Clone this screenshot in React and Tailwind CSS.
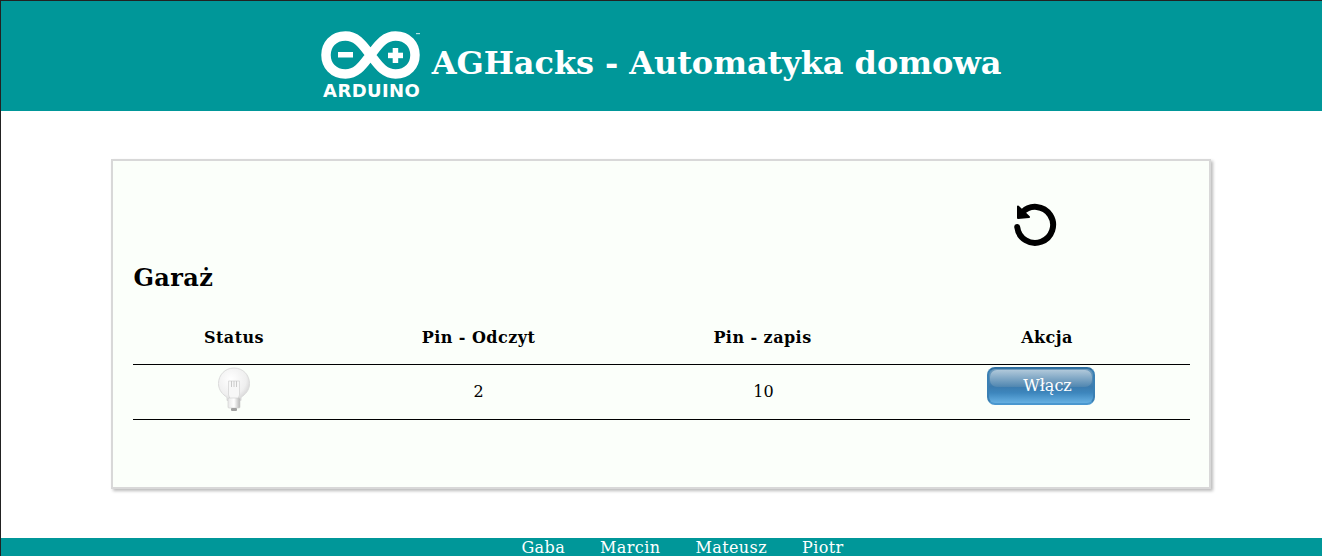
import React from "react";

const ArduinoLogo = () => (
  <div className="flex flex-col items-center w-[100px] shrink-0 -ml-[1px]">
    <svg width="100" height="50" viewBox="0 0 100 50" className="-mb-[1px]">
      <path
        d="M24.500 7C37 7 43 18 49.500 26C56 34 62 45 74.500 45C87 45 94 36 94 26C94 16 87 7 74.500 7C62 7 56 18 49.500 26C43 34 37 45 24.500 45C12 45 5 36 5 26C5 16 12 7 24.500 7Z"
        fill="none"
        stroke="#fff"
        strokeWidth="9.500"
      />
      <rect x="17" y="23" width="15" height="5.500" fill="#fff" />
      <rect x="67" y="23.700" width="15" height="5.500" fill="#fff" />
      <rect x="71.700" y="19" width="5.500" height="15" fill="#fff" />
      <rect x="95" y="4" width="4" height="1.200" fill="#fff" opacity="0.7" />
    </svg>
    <span className="font-['DejaVu_Sans'] font-bold text-[18px] leading-[20px] tracking-[0.4px] text-white mt-[3px] pl-[2px]">
      ARDUINO
    </span>
  </div>
);

const ReloadIcon = () => (
  <svg width="44" height="44" viewBox="0 0 44 44" fill="none">
    <path
      d="M4.200 24A18 18 0 1 0 9 9.500"
      stroke="#000"
      strokeWidth="6"
      strokeLinecap="round"
    />
    <path d="M5 3.500L5 15L16 14Z" fill="#000" stroke="#000" strokeWidth="2" strokeLinejoin="round" />
  </svg>
);

const Bulb = () => (
  <svg width="34" height="46" viewBox="0 0 34 46">
    <defs>
      <radialGradient id="glass" cx="0.4" cy="0.35" r="0.7">
        <stop offset="0" stopColor="#ffffff" />
        <stop offset="0.7" stopColor="#efefef" />
        <stop offset="1" stopColor="#d2d2d2" />
      </radialGradient>
      <linearGradient id="base" x1="0" x2="1" y1="0" y2="0">
        <stop offset="0" stopColor="#e8e8e8" />
        <stop offset="0.5" stopColor="#ffffff" />
        <stop offset="1" stopColor="#b5b5b5" />
      </linearGradient>
    </defs>
    <path
      d="M17 1C8 1 1.500 8 1.500 16.500c0 7 4.500 11 8.500 14v3h14v-3c4-3 8.500-7 8.500-14C32.500 8 26 1 17 1z"
      fill="url(#glass)"
      stroke="#dcdcdc"
    />
    <path d="M11.500 14h11v14l-2 5h-7l-2-5z" fill="#f7f7f7" stroke="#d6d6d6" strokeWidth="0.8" />
    <path d="M14.500 14v6M17 14v6M19.500 14v6" stroke="#cacaca" strokeWidth="1" />
    <rect x="11" y="31" width="12" height="10" rx="1" fill="url(#base)" stroke="#cccccc" strokeWidth="0.6" />
    <rect x="14" y="41" width="6" height="3" rx="1" fill="#a0a0a0" />
  </svg>
);

const App = () => {
  const people = ["Gaba", "Marcin", "Mateusz", "Piotr"];

  return (
    <div className="h-[556px] overflow-hidden flex flex-col bg-white border-l border-t border-[#222] font-['DejaVu_Serif',serif] text-black">
      <header className="h-[110px] shrink-0 bg-[#009799] flex items-start justify-center">
        <div className="flex items-start gap-[11px] pt-[28px]">
          <ArduinoLogo />
          <h1 className="text-[32px] leading-[64px] font-bold tracking-[-0.08px] text-white mt-[2px]">
            AGHacks - Automatyka domowa
          </h1>
        </div>
      </header>

      <main className="flex-1 flex flex-col items-center pt-[48px] pr-[2px]">
        <section className="w-[1100px] h-[330px] bg-[#fbfffa] border-2 border-[#d8d8d8] shadow-[2px_2px_3px_#bbb] px-[20px]">
          <div className="flex justify-end pr-[132px] pt-[42px] h-[88px]">
            <ReloadIcon />
          </div>
          <h2 className="text-[24px] font-bold tracking-[0.35px] leading-[32px] mt-[13px] pl-[1px]">Garaż</h2>
          <table className="w-[1057px] mt-[18px] table-fixed border-collapse text-[16px]">
            <thead>
              <tr className="h-[52px] border-b border-black">
                <th className="w-[202px] pl-[1px] font-bold tracking-[0.45px]">Status</th>
                <th className="w-[286px] pl-[2px] font-bold tracking-[0.45px]">Pin - Odczyt</th>
                <th className="w-[284px] font-bold tracking-[0.45px]">Pin - zapis</th>
                <th className="font-bold tracking-[0.45px]">Akcja</th>
              </tr>
            </thead>
            <tbody>
              <tr className="h-[55px] border-b border-black">
                <td className="text-center align-top pt-[2px]">
                  <div className="flex justify-center"><Bulb /></div>
                </td>
                <td className="text-center pl-[2px]">2</td>
                <td className="text-center pl-[2px]">10</td>
                <td className="align-top pt-[2px] pl-[82px]">
                  <button className="relative overflow-hidden w-[108px] h-[38px] rounded-[8px] border-2 border-t-[#2f6f9f] border-x-[#3a80b4] border-b-[#4a97cf] bg-[linear-gradient(#6f9cbd,#3b7bae_52%,#3d86bd_70%,#66b0e2)] text-white text-[16px] pl-[14px]">
                    <span className="absolute left-[1px] right-[1px] top-[1px] h-[17px] rounded-[7px] bg-[linear-gradient(#b0c8da,#4f86b0)]" />
                    <span className="relative">Włącz</span>
                  </button>
                </td>
              </tr>
            </tbody>
          </table>
        </section>
      </main>

      <footer className="h-[18px] shrink-0 bg-[#009799] flex justify-center gap-[35px] pl-[42px] text-white text-[16px] tracking-[0.4px] leading-[18px] pt-[1px]">
        {people.map((name) => (
          <span key={name}>{name}</span>
        ))}
      </footer>
    </div>
  );
};

export default App;
